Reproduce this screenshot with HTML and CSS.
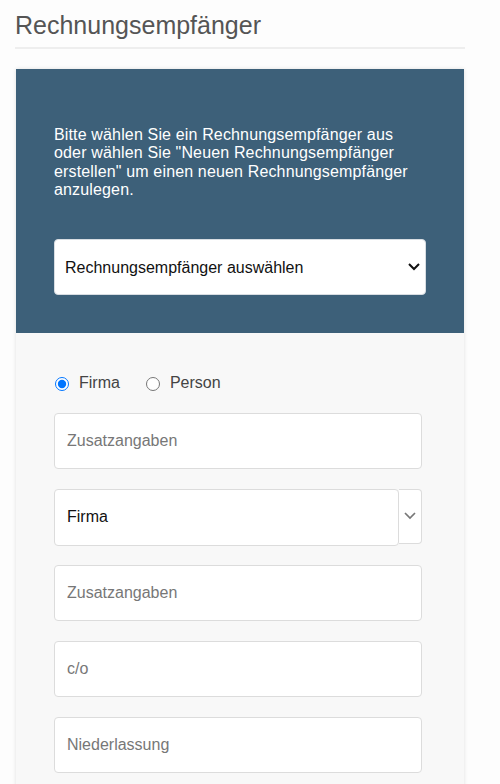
FILE: index.html
```html
<!DOCTYPE html>
<html lang="de">
<head>
<meta charset="utf-8">
<title>Rechnungsempfänger</title>
<link rel="stylesheet" href="styles.css">
</head>
<body>
<div class="page">
  <h1 class="title">Rechnungsempfänger</h1>
  <div class="card">
    <div class="card-head">
      <p class="intro">Bitte wählen Sie ein Rechnungsempfänger aus oder wählen Sie "Neuen Rechnungsempfänger erstellen" um einen neuen Rechnungsempfänger anzulegen.</p>
      <div class="select-wrap">
        <select class="recipient-select">
          <option>Rechnungsempfänger auswählen</option>
        </select>
        <svg class="select-arrow" width="12" height="8" viewBox="0 0 12 8"><path d="M1 1 L6 6 L11 1" fill="none" stroke="#111" stroke-width="2"/></svg>
      </div>
    </div>
    <div class="card-body">
      <div class="radio-row">
        <label class="radio"><input type="radio" name="typ" checked><span>Firma</span></label>
        <label class="radio"><input type="radio" name="typ"><span>Person</span></label>
      </div>
      <input class="field" type="text" placeholder="Zusatzangaben">
      <div class="select-group">
        <div class="select-main">Firma</div>
        <div class="select-addon">
          <svg width="12" height="8" viewBox="0 0 12 8"><path d="M1 1 L6 6 L11 1" fill="none" stroke="#777" stroke-width="1.7"/></svg>
        </div>
      </div>
      <input class="field" type="text" placeholder="Zusatzangaben">
      <input class="field" type="text" placeholder="c/o">
      <input class="field" type="text" placeholder="Niederlassung">
    </div>
  </div>
</div>
</body>
</html>
```

FILE: styles.css
```css
html, body {
  margin: 0;
  padding: 0;
  background: #fdfdfd;
  font-family: "Liberation Sans", Arial, sans-serif;
}

.page {
  width: 450px;
  padding: 0 35px 0 15px;
}

.title {
  margin: 11px 0 0;
  padding-bottom: 7px;
  font-size: 25px;
  font-weight: normal;
  line-height: 1.15;
  color: #555;
  border-bottom: 2px solid #eeeeee;
}

.card {
  margin: 20px 1px 0;
  background: #f8f8f8;
  box-shadow: 0 0 4px rgba(0, 0, 0, 0.12);
}

.card-head {
  background: #3d6079;
  padding: 57px 38px 38px;
}

.intro {
  margin: 0 0 40px;
  font-size: 16px;
  line-height: 1.15;
  letter-spacing: 0.15px;
  color: #fff;
}

.select-wrap {
  position: relative;
}

.recipient-select {
  display: block;
  box-sizing: border-box;
  width: 100%;
  height: 56px;
  margin: 0;
  padding: 0 30px 0 10px;
  border: 1px solid #d8dde2;
  border-radius: 4px;
  background: #fff;
  font-family: inherit;
  font-size: 16px;
  color: #111;
  appearance: none;
  -webkit-appearance: none;
}

.select-arrow {
  position: absolute;
  right: 6px;
  top: 24px;
  pointer-events: none;
}

.card-body {
  padding: 41px 42px 40px 38px;
  display: flex;
  flex-direction: column;
  gap: 20px;
}

.radio-row {
  display: flex;
  align-items: center;
  gap: 25px;
  font-size: 16px;
  line-height: 1.15;
  color: #444;
}

.radio {
  display: flex;
  align-items: center;
  gap: 10px;
}

.radio input {
  margin: 0 0 0 1px;
  width: 14px;
  height: 14px;
  accent-color: #0075ff;
}

.field {
  display: block;
  box-sizing: border-box;
  width: 100%;
  height: 56px;
  margin: 0;
  padding: 0 12px;
  border: 1px solid #dcdcdc;
  border-radius: 4px;
  background: #fff;
  font-family: inherit;
  font-size: 16px;
  color: #222;
}

.field::placeholder {
  color: #777;
}

.select-group {
  display: flex;
  align-items: flex-start;
  height: 56px;
}

.select-main {
  flex: 1;
  box-sizing: border-box;
  height: 57px;
  display: flex;
  align-items: center;
  padding: 0 12px;
  border: 1px solid #dcdcdc;
  border-radius: 4px;
  background: #fff;
  font-size: 16px;
  color: #111;
  position: relative;
  z-index: 1;
}

.select-addon {
  box-sizing: border-box;
  width: 23px;
  height: 55px;
  display: flex;
  align-items: center;
  justify-content: center;
  border: 1px solid #dcdcdc;
  border-left: none;
  border-radius: 0 4px 4px 0;
  background: #fff;
}
```
